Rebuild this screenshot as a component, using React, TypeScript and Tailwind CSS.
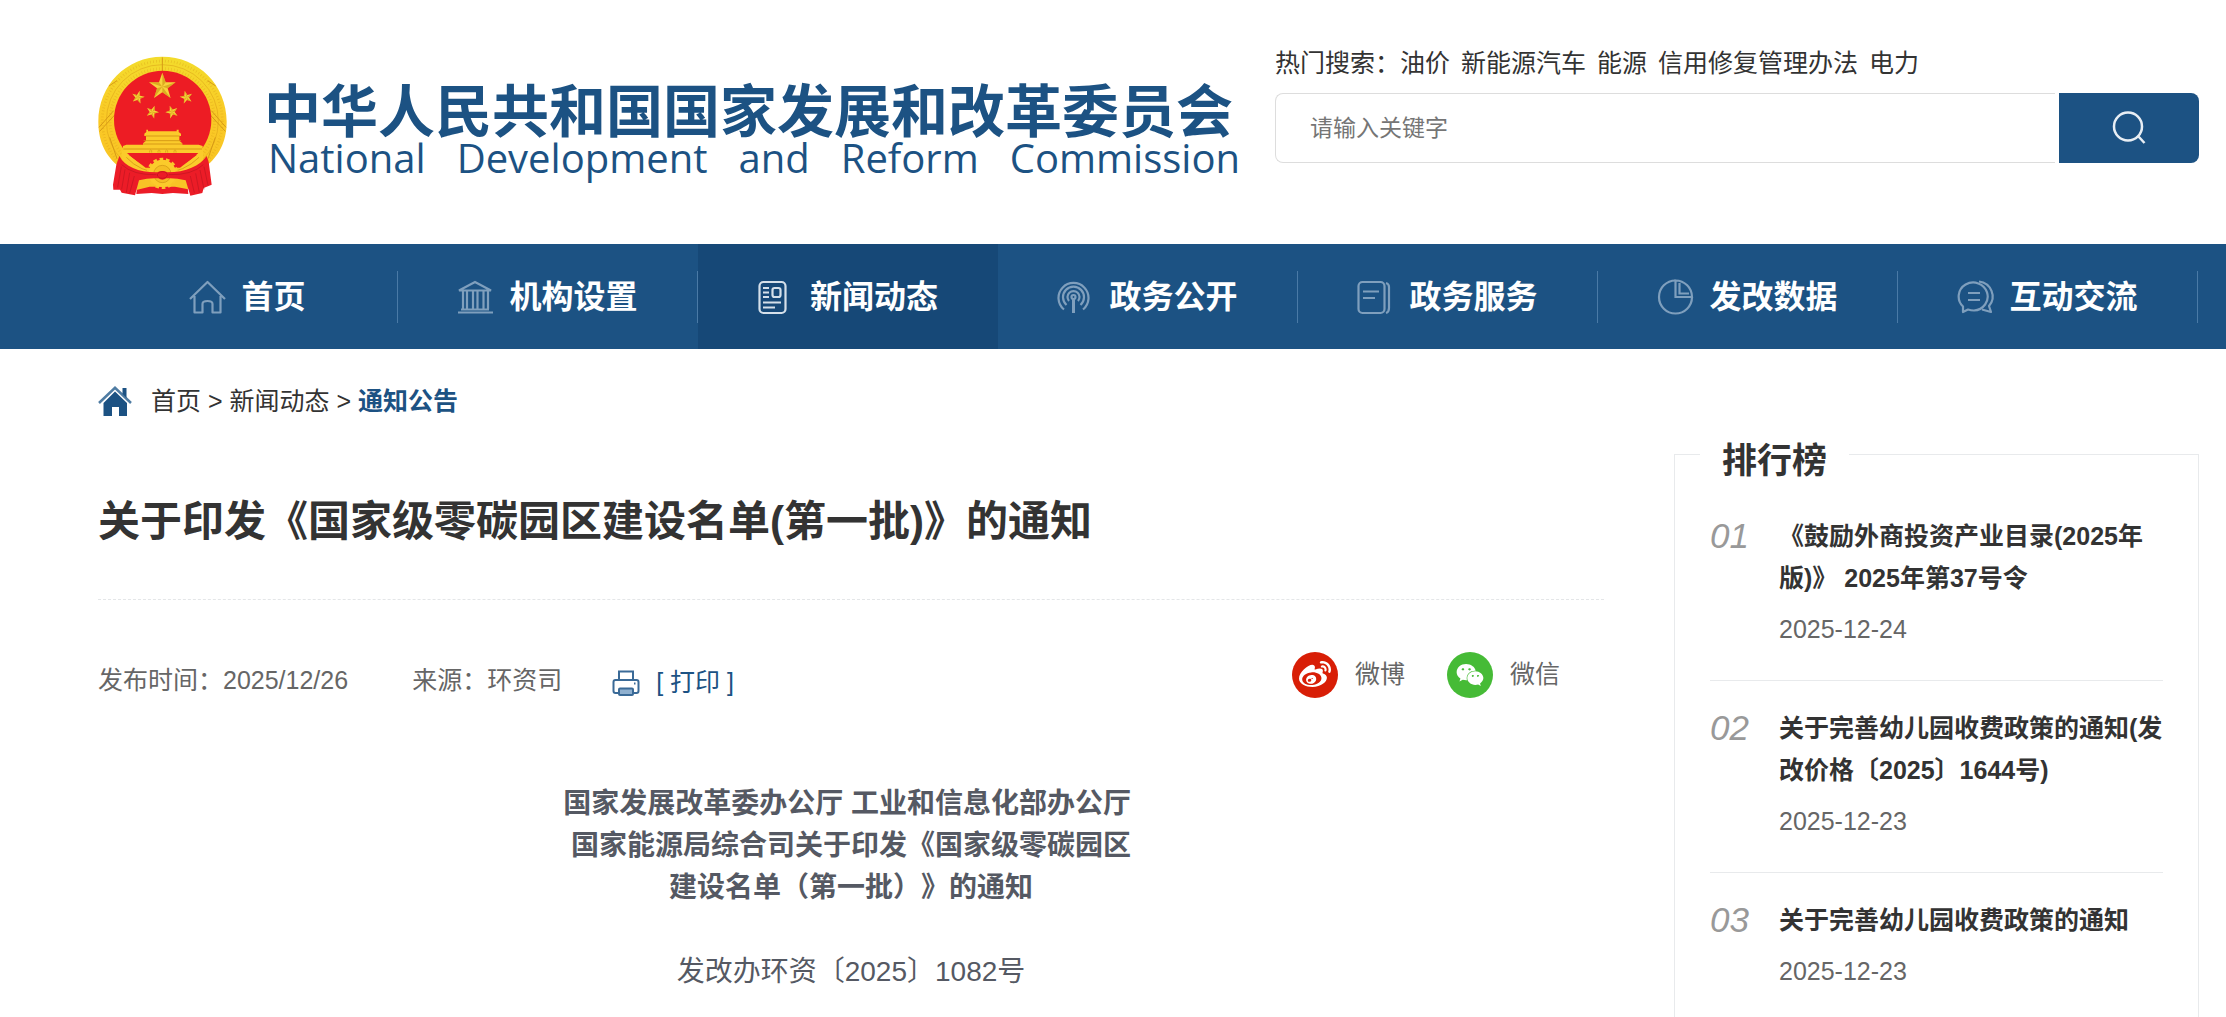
import React from "react";
import { FaWeibo, FaWeixin } from "react-icons/fa";

interface NavItem {
  label: string;
  icon: React.ReactNode;
  active?: boolean;
}

interface RankItem {
  no: string;
  title: string;
  date: string;
}

const hotWords = ["油价", "新能源汽车", "能源", "信用修复管理办法", "电力"];

const ranking: RankItem[] = [
  { no: "01", title: "《鼓励外商投资产业目录(2025年版)》 2025年第37号令", date: "2025-12-24" },
  { no: "02", title: "关于完善幼儿园收费政策的通知(发改价格〔2025〕1644号)", date: "2025-12-23" },
  { no: "03", title: "关于完善幼儿园收费政策的通知", date: "2025-12-23" },
];

// --- NAV ICONS ---
const NavIcon: React.FC<{ children: React.ReactNode }> = ({ children }) => (
  <svg viewBox="0 0 40 36" fill="none" stroke="currentColor" strokeWidth="2.200" className="h-9 w-10 shrink-0" aria-hidden="true">
    {children}
  </svg>
);

const navItems: NavItem[] = [
  {
    label: "首页",
    icon: (
      <NavIcon>
        <path d="M1 20 18.500 3 36 20M5.500 17v16.500h8V25q0-3 5-3t5 3v8.500h8V17" strokeLinejoin="round" />
      </NavIcon>
    ),
  },
  {
    label: "机构设置",
    icon: (
      <NavIcon>
        <path d="M2 11.500 18 3l16 8.500zM1 33.500h35M4 30.500h28M6 12v18M10 12v18M16 12v18M20.500 12v18M26.500 12v18M31 12v18" />
      </NavIcon>
    ),
  },
  {
    label: "新闻动态",
    active: true,
    icon: (
      <NavIcon>
        <rect x="1.500" y="3" width="26" height="31" rx="4" />
        <rect x="14.500" y="9" width="8" height="9" rx="2" />
        <path d="M5 9h6M5 13.500h6M5 18h6M5 23.500h18M5 28.500h12" />
      </NavIcon>
    ),
  },
  {
    label: "政务公开",
    icon: (
      <NavIcon>
        <path d="M7 30.500A15 15 0 1 1 26 30.500M9.500 26A10.500 10.500 0 1 1 23.500 26M12 22A6 6 0 1 1 21 22" />
        <circle cx="16.500" cy="18" r="2" />
        <path d="M16.500 20v14" strokeWidth="3" />
      </NavIcon>
    ),
  },
  {
    label: "政务服务",
    icon: (
      <NavIcon>
        <rect x="1.500" y="3" width="26" height="31" rx="4" />
        <path d="M29 4q3 1 3 4v21q0 4-3 5M6 12.500h16M6 19h12" />
      </NavIcon>
    ),
  },
  {
    label: "发改数据",
    icon: (
      <NavIcon>
        <path d="M18.500 1.500A16.500 16.500 0 1 0 35 18" />
        <path d="M18.500 1.500V18H35A16.500 16.500 0 0 0 18.500 1.500zM22.500 4v10.500H32" />
      </NavIcon>
    ),
  },
  {
    label: "互动交流",
    icon: (
      <NavIcon>
        <path d="M6 33v-5.500A14.500 14 0 1 1 17 31.500q-3 0-6-1z" strokeLinejoin="round" />
        <path d="M22 2.500a15.500 15 0 0 1 10 24.500l2 6-9-2.500M11 14h12M11 21h12" strokeLinejoin="round" />
      </NavIcon>
    ),
  },
];

// Five pointed star, unit radius 10
const Star: React.FC<{ x: number; y: number; scale: number; rotate?: number }> = ({ x, y, scale, rotate = 0 }) => (
  <g transform={`translate(${x} ${y}) rotate(${rotate}) scale(${scale})`}>
    <path d="M0-10 2.400-3.200 9.500-3.100 3.800 1.200 5.900 8.100 0 4-5.900 8.100-3.800 1.200-9.500-3.100-2.400-3.200z" fill="#f8d23c" />
    <path d="M0-10 2.400-3.200 0 0zM9.500-3.100 3.800 1.200 0 0zM5.900 8.100 0 4 0 0zM-5.900 8.100-3.800 1.200 0 0zM-9.500-3.100-2.400-3.200 0 0z" fill="#c9920f" opacity="0.600" />
  </g>
);

const Emblem: React.FC = () => (
  <svg viewBox="27 18 387 420" className="h-[140px] w-[129px] shrink-0" role="img" aria-label="国徽">
    <defs>
      <linearGradient id="gold" x1="0" y1="0" x2="0" y2="1">
        <stop offset="0" stopColor="#f3dc2c" />
        <stop offset="0.500" stopColor="#fac926" />
        <stop offset="1" stopColor="#f8c424" />
      </linearGradient>
    </defs>
    <path d="M220 20C328 20 413 105 413 215C413 280 386 320 352 348L310 390H134L88 348C54 320 28 280 28 215C28 105 112 20 220 20z" fill="url(#gold)" />
    {/* wheat ears */}
    <g fill="none" stroke="#d79a16">
      <ellipse cx="220" cy="213" rx="180" ry="180" strokeWidth="8" strokeDasharray="2 7" opacity="0.450" />
      <ellipse cx="220" cy="213" rx="168" ry="169" strokeWidth="2" opacity="0.700" />
      <ellipse cx="220" cy="213" rx="157" ry="157" strokeWidth="9" strokeDasharray="2 7" opacity="0.400" />
      <path d="M220 22v42M60 108l24-16M380 108l-24-16" strokeWidth="3" />
      <path d="M30 232l44-50M32 244l46-50M411 232l-44-50M409 244l-46-50M62 262l22 64M379 262l-22 64" strokeWidth="3" />
    </g>
    <ellipse cx="221" cy="209" rx="146" ry="147" fill="#ed1c24" />
    <Star x={220} y={110} scale={4.2} />
    <Star x={147} y={142} scale={2} rotate={14} />
    <Star x={292} y={142} scale={2} rotate={-14} />
    <Star x={190} y={186} scale={2} rotate={20} />
    <Star x={249} y={186} scale={2} rotate={-20} />
    {/* gate tower */}
    <path d="M172 246v-7h5v5h86v-5h6v7l7 5v7h-5v14l9 8v4h49l12 4v13l-4 8H106l-4-8v-13l10-4h50v-4l9-8v-14h-5v-7z" fill="#fbcb2b" />
    <path d="M170 258h102M164 272h112M162 282h117M103 297h236" fill="none" stroke="#cf9212" strokeWidth="2.500" />
    <path d="M182 308v-6q3-5 6 0v6M207 308v-6q3-5 6 0v6M230 308v-6q3-5 6 0v6M255 308v-6q3-5 6 0v6" fill="none" stroke="#d49817" strokeWidth="2" />
    {/* side bands */}
    <path d="M98 300l22 15 56 44h90l56-44 20-15v56l-62 44H158l-60-44z" fill="#fbcb2b" />
    <path d="M120 315h203l-50 38H170z" fill="#ed1c24" />
    <path d="M112 322q40 44 108 48 66-4 110-48" fill="none" stroke="#d39816" strokeWidth="2.500" />
    {/* lower knot: red base, gold tails, gear */}
    <path d="M146 392h148l4 40-46-3-32 3-32-3-46 3z" fill="#ec1c27" />
    <path d="M146 386h148l4 32-40-8h-76l-40 10z" fill="#f8c426" />
    <circle cx="220" cy="370" r="43" fill="none" stroke="#f9c62a" strokeWidth="8" strokeDasharray="11 8.300" />
    <circle cx="220" cy="370" r="41" fill="#fbcb2b" />
    <circle cx="220" cy="372" r="26" fill="#f5be24" stroke="#cf9212" strokeWidth="2" />
    {/* red drapes */}
    <path d="M91 318c16 32 60 50 114 49q15-8 30 0c56 0 98-20 118-49l6 18 9 68-24 10-4 15-36 8-14-46q-32-8-58-6-12 8-24 0-28-2-58 6l-12 45-40-8-5-9-20 0-1-15 10-60z" fill="#ec1c27" />
    <path d="M97 350 86 412M108 358l-10 60M122 368l-10 60M136 378l-14 52M345 350l12 56M333 360l12 58M320 370l11 58M304 378l12 50M98 344q34 32 104 30M343 344q-34 32-104 30" fill="none" stroke="#b8141f" strokeWidth="2.500" opacity="0.700" />
    <ellipse cx="220" cy="375" rx="15" ry="10" fill="#ec1c27" stroke="#b8141f" strokeWidth="2" />
  </svg>
);

const Header: React.FC = () => (
  <header className="flex h-[244px] items-start pl-[98px] pr-[27px]">
    <a href="#" className="mt-14 flex w-[1177px] shrink-0 items-start text-[#1c5283]">
      <Emblem />
      <div className="ml-[37px] mt-7 w-[980px]">
        <div className="whitespace-nowrap text-[57px] font-bold leading-[57px]">中华人民共和国国家发展和改革委员会</div>
        <div className="flex justify-between pl-1 pr-1 font-['Open_Sans','Noto_Sans',sans-serif] text-[40px] leading-[34px]">
          <span>National</span>
          <span>Development</span>
          <span>and</span>
          <span>Reform</span>
          <span>Commission</span>
        </div>
      </div>
    </a>

    <div className="mt-[42px] flex-1">
      <div className="flex h-[42px] items-center text-[25px] leading-[42px] text-[#333]">
        <span>热门搜索：</span>
        <div className="flex gap-[11px]">
          {hotWords.map((word) => (
            <a key={word} href="#">{word}</a>
          ))}
        </div>
      </div>
      <form className="mt-[9px] flex h-[70px]" onSubmit={(e) => e.preventDefault()}>
        <input
          type="text"
          aria-label="请输入关键字"
          placeholder="请输入关键字"
          className="mr-1 min-w-0 flex-1 rounded-l-lg border border-r-0 border-[#ddd] pl-[34px] text-[23px] text-[#333] outline-none placeholder:text-[#757575]"
        />
        <button type="submit" aria-label="搜索" className="flex w-[140px] items-center justify-center rounded-r-lg bg-[#1c5283]">
          <svg viewBox="0 0 34 34" fill="none" stroke="#e8eef4" strokeWidth="2.500" className="size-[34px]">
            <circle cx="16" cy="15.500" r="14" />
            <path d="m26.500 25.500 6 6.500" />
          </svg>
        </button>
      </form>
    </div>
  </header>
);

const NavBar: React.FC = () => (
  <nav className="bg-[#1c5283] pl-[98px] pr-7">
    <ul className="grid grid-cols-7">
      {navItems.map((item) => (
        <li key={item.label} className={item.active ? "flex h-[105px] items-center bg-[#164877]" : "flex h-[105px] items-center"}>
          <a
            href="#"
            className={
              item.active
                ? "flex h-[52px] flex-1 items-center justify-center gap-3 text-[32px] font-bold text-white"
                : "flex h-[52px] flex-1 items-center justify-center gap-3 border-r border-[#4a7aa6] text-[32px] font-bold text-white"
            }
          >
            <span className={item.active ? "text-[#d5e0ea]" : "text-[#7f9fbd]"}>{item.icon}</span>
            {item.label}
          </a>
        </li>
      ))}
    </ul>
  </nav>
);

const Breadcrumb: React.FC = () => (
  <div className="flex h-[42px] items-center text-[25px] leading-[42px] text-[#333]">
    <svg viewBox="0 0 34 30" className="mr-[19px] h-[30px] w-[34px]" fill="#1c5283" aria-hidden="true">
      <path d="M17 5.500 29 17v13h-8V21h-7v9H5.500V17z" />
      <path d="M1 17 17 1.800 33 17" fill="none" stroke="#4f7ca3" strokeWidth="2.500" />
      <path d="M24.500 2h4v10l-4-4z" />
    </svg>
    <div>
      <a href="#">首页</a> &gt; <a href="#">新闻动态</a> &gt; <a href="#" className="font-bold text-[#1c5283]">通知公告</a>
    </div>
  </div>
);

const MetaRow: React.FC = () => (
  <div className="mt-[52px] flex h-[46px] items-center text-[25px] text-[#666]">
    <div className="flex items-center pt-3">
      <span>发布时间：2025/12/26</span>
      <span className="ml-16">来源：环资司</span>
      <button type="button" className="ml-[50px] flex items-center pt-1 text-[#1c5283]">
        <svg viewBox="0 0 28 26" fill="none" stroke="#3a6a97" strokeWidth="2" className="mr-4 h-[26px] w-7" aria-hidden="true">
          <path d="M7 10V1.500h14V10" />
          <rect x="1.500" y="10" width="25" height="13" rx="2" />
          <rect x="7" y="18.500" width="14" height="6.500" rx="1" fill="#8fb0cf" />
          <path d="M22 13.500h1.500" />
        </svg>
        [ 打印 ]
      </button>
    </div>
    <button type="button" className="ml-auto flex items-center gap-[17px]">
      <span className="flex size-[46px] items-center justify-center rounded-full bg-[#d81e06] text-white">
        <FaWeibo size={32} />
      </span>
      微博
    </button>
    <button type="button" className="ml-[42px] mr-11 flex items-center gap-[17px]">
      <span className="flex size-[46px] items-center justify-center rounded-full bg-[#46bb36] text-white">
        <FaWeixin size={28} />
      </span>
      微信
    </button>
  </div>
);

const Sidebar: React.FC = () => (
  <aside className="relative mt-[105px] w-[525px] shrink-0 border border-b-0 border-[#e8eaec] px-[35px] pt-[34px]">
    {/* heading sits on top of the frame line */}
    <h2 className="absolute -top-[15px] left-[25px] bg-white px-[22px] text-[35px] font-bold leading-[42px] text-[#333]">排行榜</h2>
    <ol>
      {ranking.map((item) => (
        <li key={item.no} className="flex border-b border-[#e8eaec] pb-[30px] pt-[26px] last:border-b-0 last:pb-0">
          <span className="w-[69px] shrink-0 text-[35px] italic leading-[42px] text-[#999]">{item.no}</span>
          <div className="min-w-0 flex-1">
            <a href="#" className="block text-[25px] font-bold leading-[42px] text-[#333]">{item.title}</a>
            <div className="mt-[9px] text-[25px] leading-[42px] text-[#666]">{item.date}</div>
          </div>
        </li>
      ))}
    </ol>
  </aside>
);

const App: React.FC = () => (
  <div className="flex min-h-screen flex-col bg-white font-['Liberation_Sans','Noto_Sans_CJK_SC',sans-serif] [text-spacing-trim:space-all]">
    <Header />
    <NavBar />
    <main className="flex flex-1 gap-[70px] pl-[98px] pr-[27px]">
      <article className="min-w-0 flex-1 pt-[31px]">
        <Breadcrumb />
        <h1 className="mt-[70px] text-[42px] font-bold leading-[60px] text-[#333]">关于印发《国家级零碳园区建设名单(第一批)》的通知</h1>
        <div className="mt-[47px] border-t border-dashed border-[#e4e6e8]"></div>
        <MetaRow />
        <div className="mt-[85px] text-center text-[28px] leading-[42px] text-[#555963]">
          <p className="font-bold">
            国家发展改革委办公厅 工业和信息化部办公厅&nbsp;
            <br />
            国家能源局综合司关于印发《国家级零碳园区
            <br />
            建设名单（第一批）》的通知
          </p>
          <p className="mt-[42px]">发改办环资〔2025〕1082号</p>
        </div>
      </article>
      <Sidebar />
    </main>
  </div>
);

export default App;
